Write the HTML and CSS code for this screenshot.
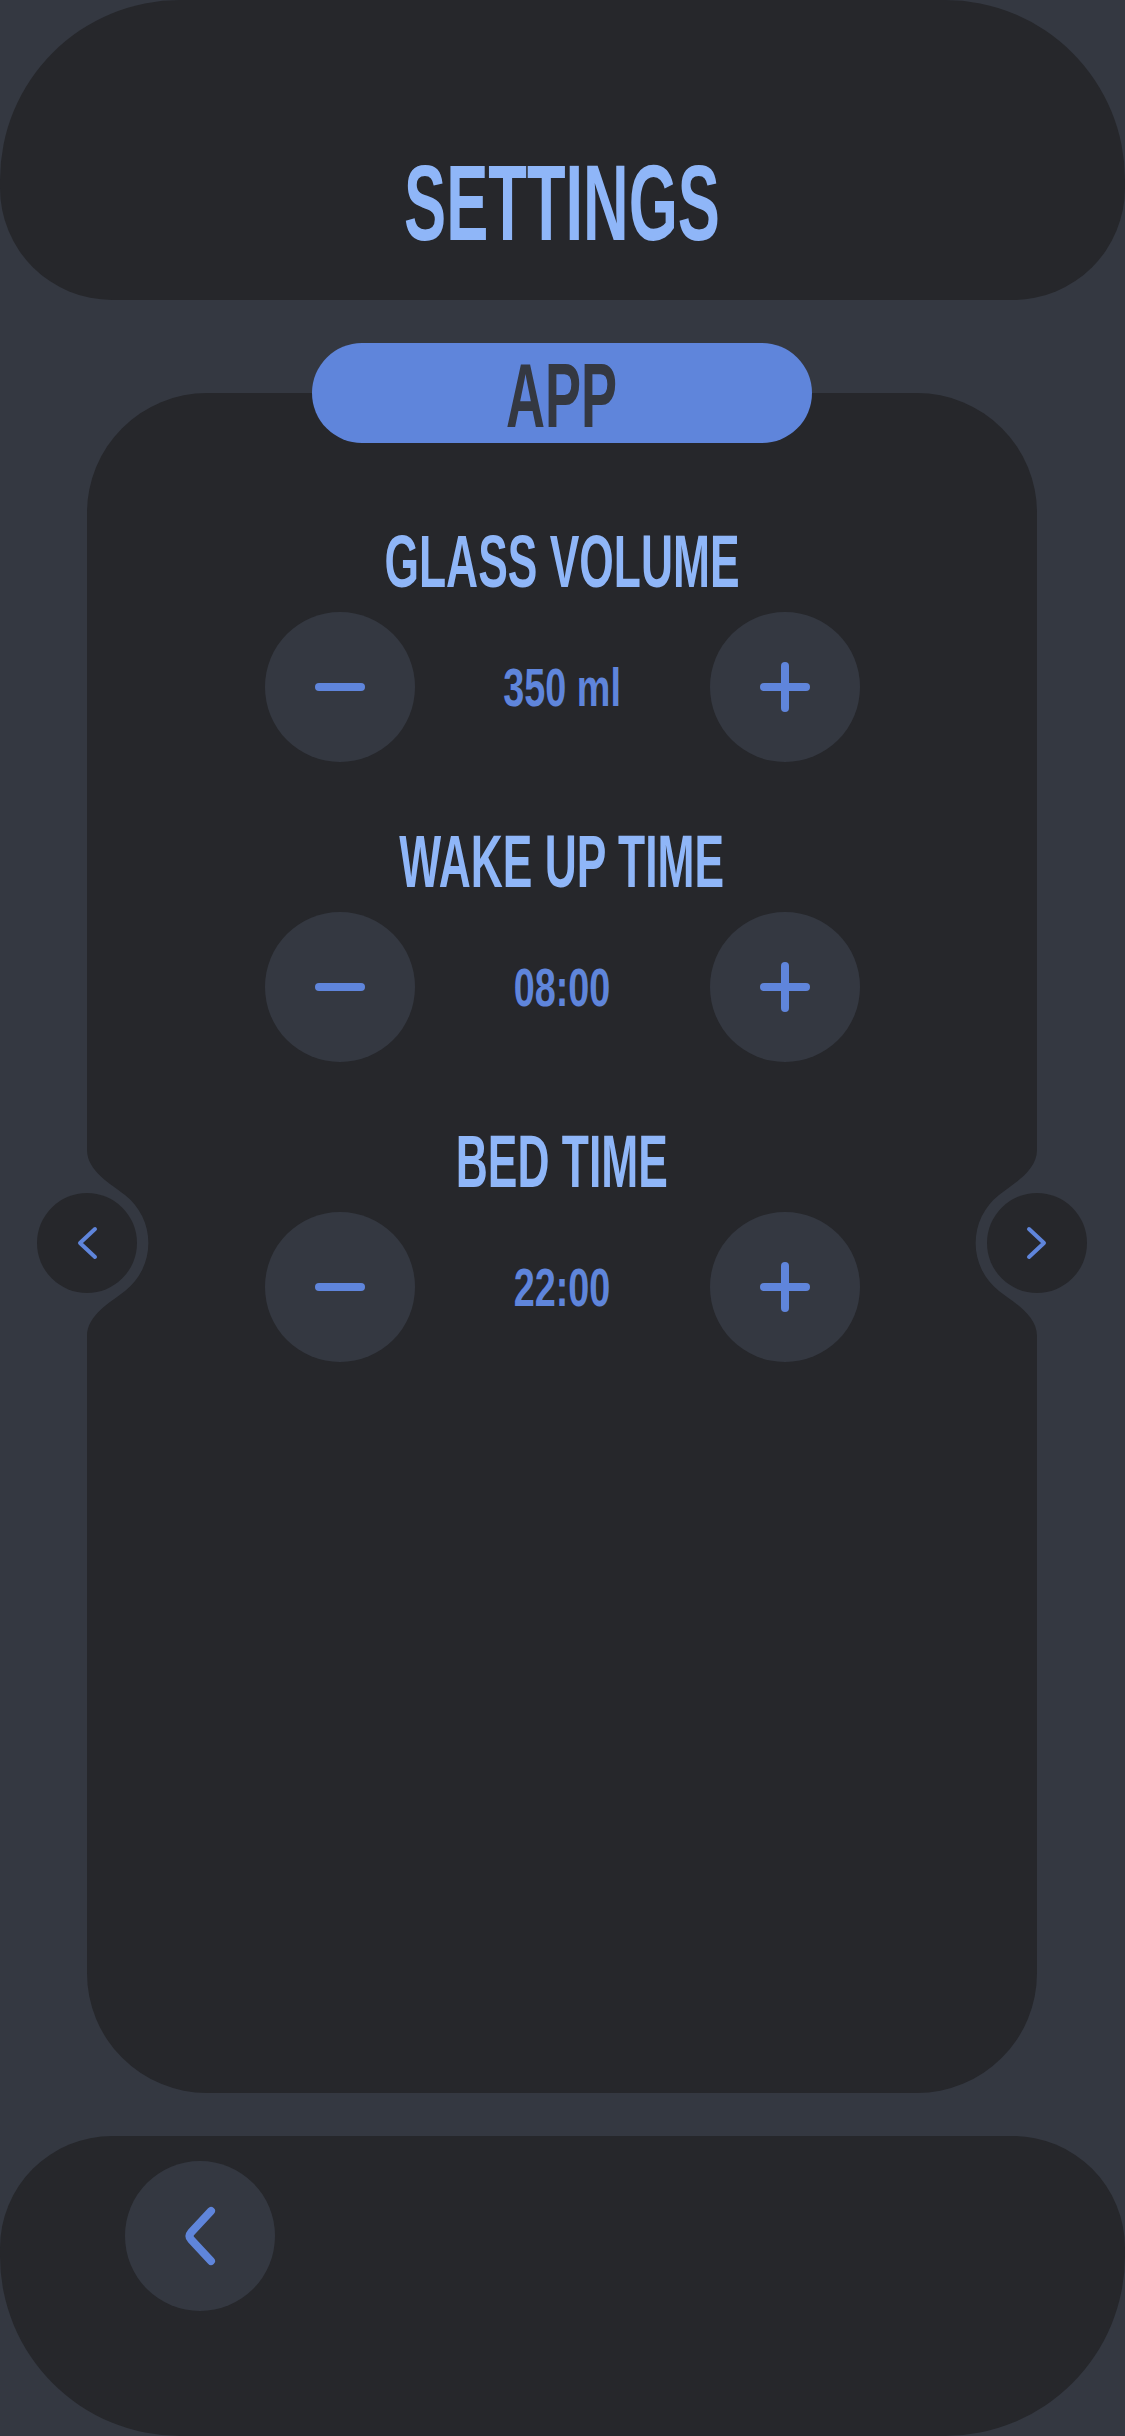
FILE: index.html
```html
<!DOCTYPE html>
<html lang="en">
<head>
<meta charset="utf-8">
<title>Settings</title>
<link rel="stylesheet" href="styles.css">
</head>
<body>
<div class="screen">
  <header class="top-bar">
    <h1 class="title"><span class="squeeze">SETTINGS</span></h1>
  </header>

  <div class="stage">
    <section class="panel">
      <div class="tab"><span class="squeeze">APP</span></div>

      <div class="setting">
        <h2 class="setting-title"><span class="squeeze">GLASS VOLUME</span></h2>
        <div class="controls">
          <button class="round-btn" aria-label="Decrease">
            <svg width="50" height="50" viewBox="-25 -25 50 50"><line x1="-21" y1="0" x2="21" y2="0" class="icon-stroke"/></svg>
          </button>
          <span class="value"><span class="squeeze-v">350 ml</span></span>
          <button class="round-btn" aria-label="Increase">
            <svg width="50" height="50" viewBox="-25 -25 50 50"><line x1="-21" y1="0" x2="21" y2="0" class="icon-stroke"/><line x1="0" y1="-21" x2="0" y2="21" class="icon-stroke"/></svg>
          </button>
        </div>
      </div>

      <div class="setting">
        <h2 class="setting-title"><span class="squeeze">WAKE UP TIME</span></h2>
        <div class="controls">
          <button class="round-btn" aria-label="Decrease">
            <svg width="50" height="50" viewBox="-25 -25 50 50"><line x1="-21" y1="0" x2="21" y2="0" class="icon-stroke"/></svg>
          </button>
          <span class="value"><span class="squeeze-v">08:00</span></span>
          <button class="round-btn" aria-label="Increase">
            <svg width="50" height="50" viewBox="-25 -25 50 50"><line x1="-21" y1="0" x2="21" y2="0" class="icon-stroke"/><line x1="0" y1="-21" x2="0" y2="21" class="icon-stroke"/></svg>
          </button>
        </div>
      </div>

      <div class="setting">
        <h2 class="setting-title"><span class="squeeze">BED TIME</span></h2>
        <div class="controls">
          <button class="round-btn" aria-label="Decrease">
            <svg width="50" height="50" viewBox="-25 -25 50 50"><line x1="-21" y1="0" x2="21" y2="0" class="icon-stroke"/></svg>
          </button>
          <span class="value"><span class="squeeze-v">22:00</span></span>
          <button class="round-btn" aria-label="Increase">
            <svg width="50" height="50" viewBox="-25 -25 50 50"><line x1="-21" y1="0" x2="21" y2="0" class="icon-stroke"/><line x1="0" y1="-21" x2="0" y2="21" class="icon-stroke"/></svg>
          </button>
        </div>
      </div>

      <button class="side-nav side-left" aria-label="Previous">
        <svg width="140" height="220" viewBox="-70 -110 140 220">
          <path d="M0,-100 L0,-93 C0,-72 24,-59 38,-48 A61,61 0 0 1 38,48 C24,59 0,72 0,93 L0,100 Z" class="notch"/>
          <circle r="50" class="side-dot"/>
          <path d="M8,-14 L-7,0 L8,14" class="chev-thin"/>
        </svg>
      </button>
      <button class="side-nav side-right" aria-label="Next">
        <svg width="140" height="220" viewBox="-70 -110 140 220">
          <path d="M0,-100 L0,-93 C0,-72 -24,-59 -38,-48 A61,61 0 0 0 -38,48 C-24,59 0,72 0,93 L0,100 Z" class="notch"/>
          <circle r="50" class="side-dot"/>
          <path d="M-8,-14 L7,0 L-8,14" class="chev-thin"/>
        </svg>
      </button>
    </section>
  </div>

  <footer class="bottom-bar">
    <button class="back-btn" aria-label="Back">
      <svg width="40" height="70" viewBox="-20 -35 40 70">
        <path d="M11,-25 L-9,-3.5 Q-12,0 -9,3.5 L11,25" class="chev-bold"/>
      </svg>
    </button>
  </footer>
</div>
</body>
</html>
```

FILE: styles.css
```css
* {
  box-sizing: border-box;
  margin: 0;
  padding: 0;
}

html,
body {
  width: 1125px;
  height: 2436px;
}

body {
  background: #343841;
  font-family: "Liberation Sans", Arial, sans-serif;
  font-weight: 700;
  overflow: hidden;
}

button {
  border: none;
  background: none;
  font: inherit;
  color: inherit;
  cursor: pointer;
}

.screen {
  display: flex;
  flex-direction: column;
  width: 1125px;
  height: 2436px;
}

/* Header */
.top-bar {
  flex: none;
  height: 300px;
  background: #26272b;
  border-radius: 180px 180px 112px 112px;
  padding-top: 149px;
  text-align: center;
}

.title {
  font-size: 108px;
  line-height: 1;
  font-weight: 700;
  color: #8fb6f8;
}

.squeeze {
  display: inline-block;
  transform: scaleX(0.6);
  white-space: nowrap;
}

.title .squeeze {
  transform: scaleX(0.585);
}

/* Main panel */
.stage {
  flex: 1;
  padding: 93px 88px 43px 87px;
}

.panel {
  position: relative;
  height: 1700px;
  background: #26272b;
  border-radius: 120px;
  display: flex;
  flex-direction: column;
  align-items: center;
}

.tab {
  margin-top: -50px;
  width: 500px;
  height: 100px;
  border-radius: 50px;
  background: #5f85db;
  color: #343841;
  font-size: 91px;
  line-height: 91px;
  padding-top: 7px;
  text-align: center;
}

.tab .squeeze {
  transform: scaleX(0.594);
}

.setting {
  display: flex;
  flex-direction: column;
  align-items: center;
  margin-top: 63px;
}

.tab + .setting {
  margin-top: 82px;
}

.setting-title {
  height: 74px;
  font-size: 74px;
  line-height: 74px;
  font-weight: 700;
  color: #8fb6f8;
  text-align: center;
}

.controls {
  margin-top: 13px;
  width: 595px;
  display: flex;
  justify-content: space-between;
  align-items: center;
}

.round-btn {
  width: 150px;
  height: 150px;
  border-radius: 50%;
  background: #343841;
  display: flex;
  align-items: center;
  justify-content: center;
}

.icon-stroke {
  stroke: #5f85db;
  stroke-width: 8;
  stroke-linecap: round;
}

.value {
  font-size: 54px;
  line-height: 1;
  color: #5f85db;
}

.squeeze-v {
  display: inline-block;
  transform: scaleX(0.7);
  white-space: nowrap;
}

/* Side navigation over the panel edges */
.side-nav {
  position: absolute;
  top: 50%;
  margin-top: -110px;
  width: 140px;
  height: 220px;
  display: block;
}

.side-nav svg {
  display: block;
}

.side-left {
  left: -70px;
}

.side-right {
  right: -70px;
}

.notch {
  fill: #343841;
}

.side-dot {
  fill: #26272b;
}

.chev-thin {
  fill: none;
  stroke: #5f85db;
  stroke-width: 4;
  stroke-linecap: round;
  stroke-linejoin: round;
}

/* Footer */
.bottom-bar {
  flex: none;
  height: 300px;
  background: #26272b;
  border-radius: 112px 112px 180px 180px;
  padding: 25px 0 0 125px;
}

.back-btn {
  width: 150px;
  height: 150px;
  border-radius: 50%;
  background: #343841;
  display: flex;
  align-items: center;
  justify-content: center;
}

.chev-bold {
  fill: none;
  stroke: #5f85db;
  stroke-width: 8;
  stroke-linecap: round;
  stroke-linejoin: round;
}
```
